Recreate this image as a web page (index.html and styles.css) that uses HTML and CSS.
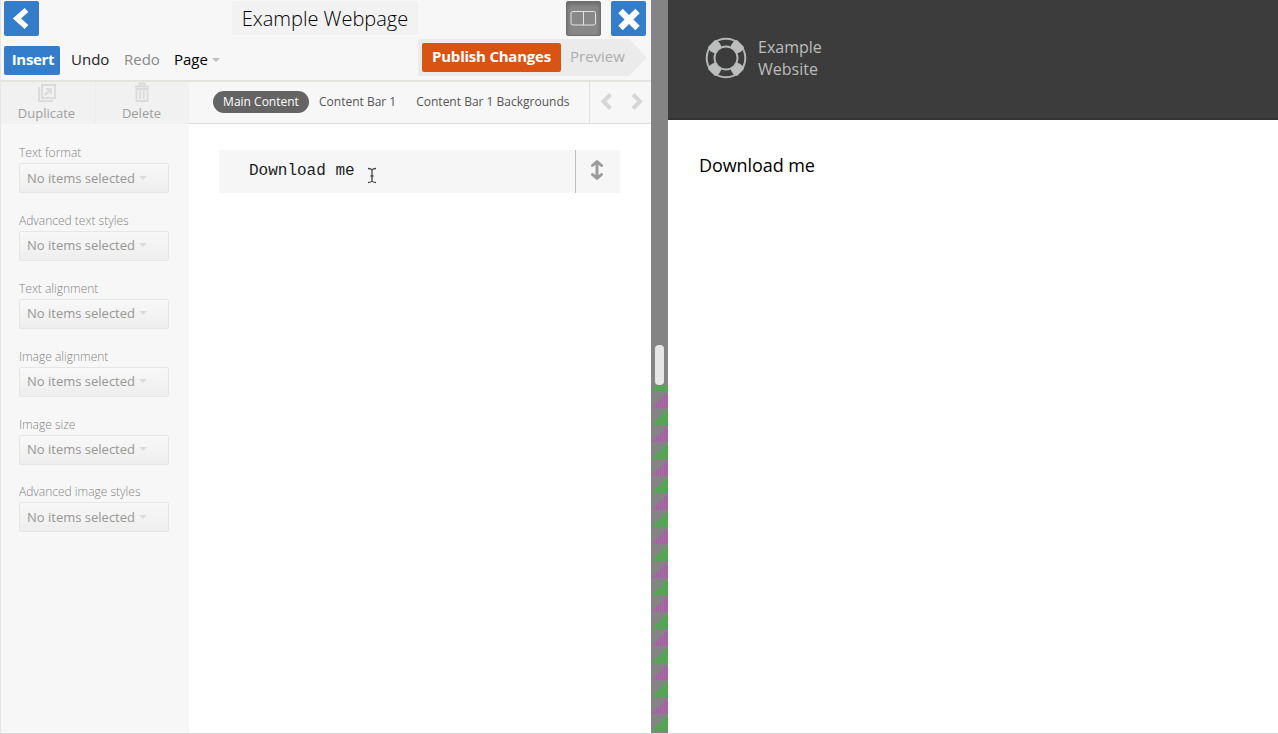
FILE: index.html
```
<!DOCTYPE html>
<html lang="en">
<head>
<meta charset="utf-8">
<title>Example Webpage</title>
<link rel="stylesheet" href="styles.css">
</head>
<body>
<div class="app">
  <section class="editor">
    <header class="header">
      <div class="title-row">
        <button class="square blue back" aria-label="Back"><svg width="35" height="35" viewBox="0 0 35 35"><path d="M22.500 9 13 17.500 22.500 26" fill="none" stroke="#fff" stroke-width="5.500"/></svg></button>
        <h1 class="title"><span>Example Webpage</span></h1>
        <button class="square split" aria-label="Split view"><svg width="35" height="35" viewBox="0 0 35 35"><rect x="5" y="10.500" width="24.500" height="13.500" rx="2" fill="none" stroke="#e4e4e4"/><path d="M17.500 10.500V24" stroke="#e4e4e4"/></svg></button>
        <button class="square blue" aria-label="Close"><svg width="35" height="35" viewBox="0 0 35 35"><path d="M9.500 10 26.500 27M26.500 10 9.500 27" stroke="#fff" stroke-width="6.200"/></svg></button>
      </div>
      <div class="tool-row">
        <button class="insert"><span>Insert</span></button>
        <span class="tool undo">Undo</span>
        <span class="tool redo">Redo</span>
        <span class="tool page">Page</span>
        <i class="caret"></i>
        <div class="publish-bar">
          <button class="publish"><span>Publish Changes</span></button>
          <span class="preview-label">Preview</span>
        </div>
      </div>
    </header>
    <div class="body">
      <aside class="sidebar">
        <div class="actions">
          <div class="action duplicate">
            <svg width="20" height="20" viewBox="0 0 20 20"><g fill="none" stroke="#dcdcdc" stroke-width="2"><path d="M5 3H18V16H5ZM2 5V19H16"/><path d="M8 13 14 7M9 7H14V12"/></g></svg>
            <span>Duplicate</span>
          </div>
          <div class="action delete">
            <svg width="20" height="20" viewBox="0 0 20 20"><g fill="none" stroke="#dadada" stroke-width="1.800"><path d="M3 4.500H17M7.500 4V1.500H12.500V4M4.500 7V19H15.500V7M8.200 8V17M11.800 8V17M3.600 7H16.400"/></g></svg>
            <span>Delete</span>
          </div>
        </div>
        <div class="fields">
          <div class="field"><label>Text format</label><div class="select"><span>No items selected</span><i></i></div></div>
          <div class="field"><label>Advanced text styles</label><div class="select"><span>No items selected</span><i></i></div></div>
          <div class="field"><label>Text alignment</label><div class="select"><span>No items selected</span><i></i></div></div>
          <div class="field"><label>Image alignment</label><div class="select"><span>No items selected</span><i></i></div></div>
          <div class="field"><label>Image size</label><div class="select"><span>No items selected</span><i></i></div></div>
          <div class="field"><label>Advanced image styles</label><div class="select"><span>No items selected</span><i></i></div></div>
        </div>
      </aside>
      <main class="content">
        <nav class="tabs">
          <span class="tab active">Main Content</span>
          <span class="tab bar">Content Bar 1</span>
          <span class="tab">Content Bar 1 Backgrounds</span>
          <div class="arrows">
            <svg width="60" height="40" viewBox="0 0 60 40"><path d="M20.500 12.500 13.500 19.500 20.500 26.500M43 12.500 50 19.500 43 26.500" fill="none" stroke="#d6d6d6" stroke-width="4"/></svg>
          </div>
        </nav>
        <div class="block">
          <div class="block-text">Download me</div>
          <div class="handle"><svg width="14" height="22" viewBox="0 0 14 22"><path d="M7 3V19M2.500 6.500 7 2.500 11.500 6.500M2.500 15.500 7 19.500 11.500 15.500" fill="none" stroke="#9b9b9b" stroke-width="3" stroke-linecap="round" stroke-linejoin="round"/></svg></div>
          <svg class="cursor" width="10" height="17" viewBox="0 0 10 17"><path d="M1 1.500Q4 1.500 5 3Q6 1.500 9 1.500M5 3V14M3.500 9H6.500M1 15.500Q4 15.500 5 14Q6 15.500 9 15.500" fill="none" stroke="#444" stroke-width="1.300"/></svg>
        </div>
      </main>
    </div>
  </section>
  <div class="divider">
    <svg width="18" height="733" viewBox="0 0 18 733">
      <defs>
        <pattern id="wedges" width="18" height="34" y="391" patternUnits="userSpaceOnUse">
          <path d="M2 16 17 1V17H2Z" fill="#c24abe"/>
          <path d="M2 33 17 18V34H2Z" fill="#27c427"/>
        </pattern>
      </defs>
      <rect y="385" width="18" height="348" fill="url(#wedges)"/>
      <path d="M3.500 385V733M5.500 385V733M7.500 385V733M9.500 385V733M11.500 385V733M13.500 385V733M15.500 385V733M17.500 385V733" stroke="#848484" stroke-width="1"/>
      <rect x="5" y="345" width="9" height="40" rx="4" fill="#e6e6e6"/>
    </svg>
  </div>
  <section class="site">
    <header class="site-header">
      <svg width="42" height="42" viewBox="0 0 42 42">
        <g fill="none" stroke="#b4b6b5"><circle cx="21" cy="21" r="19.300" stroke-width="2"/><circle cx="21" cy="21" r="11.500" stroke-width="2"/></g>
        <g fill="#bcbebd"><path d="M3 10 10 3Q15 4 16.500 10.500Q12 12 10.500 16.500Q4 15 3 10Z"/><path transform="rotate(90 21 21)" d="M3 10 10 3Q15 4 16.500 10.500Q12 12 10.500 16.500Q4 15 3 10Z"/><path transform="rotate(180 21 21)" d="M3 10 10 3Q15 4 16.500 10.500Q12 12 10.500 16.500Q4 15 3 10Z"/><path transform="rotate(270 21 21)" d="M3 10 10 3Q15 4 16.500 10.500Q12 12 10.500 16.500Q4 15 3 10Z"/></g>
      </svg>
      <div class="brand"><span>Example</span><span>Website</span></div>
    </header>
    <p class="site-text">Download me</p>
  </section>
</div>
</body>
</html>
```
FILE: styles.css
```
* { box-sizing: border-box; }
body { margin: 0; background: #fff; font-family: "Open Sans", sans-serif; overflow: hidden; }
button { border: 0; padding: 0; font-family: inherit; display: block; }
svg { display: block; }
.app { display: flex; width: 1278px; height: 734px; border-bottom: 1px solid #d8d8d8; }
.editor { flex: none; width: 651px; height: 733px; display: flex; flex-direction: column; border-left: 1px solid #e6e6e6; }
.header { height: 82px; background: #f7f7f7; border-bottom: 2px solid #e3e3e0; }
.title-row { display: flex; height: 39px; padding: 1px 5px 0 3px; }
.square { width: 35px; height: 35px; border-radius: 2px; flex: none; }
.blue { background: #347dca; }
.title { margin: 0 auto 0 193px; width: 186px; height: 34px; background: #f2f2f2; border-radius: 3px; font-size: 20px; font-weight: 300; line-height: 35px; color: #000; text-align: center; white-space: nowrap; }
.split { background: #888; border: 1px solid #6f6f6f; margin-right: 10px; box-shadow: inset 0 2px 4px #666; }
.split svg { margin: -1px; }
.tool-row { display: flex; align-items: flex-start; height: 41px; padding-left: 3px; white-space: nowrap; font-size: 15px; }
.insert { margin-top: 7px; width: 56px; height: 29px; background: #347dca; border-radius: 2px; color: #fff; font-size: 15px; font-weight: 700; line-height: 27px; letter-spacing: -0.3px; padding-left: 2px; }
.insert span { position: relative; top: -1px; }
.tool { margin-top: 7px; line-height: 26px; }
.undo { margin-left: 11px; width: 53px; color: #222; }
.redo { width: 50px; color: #888; }
.page { width: 35px; color: #000; }
.caret { margin: 19px 0 0 3px; border: 4px solid transparent; border-top-color: #bdbdbd; border-bottom: 0; }
.publish-bar { margin: 0 3px 0 auto; width: 230px; height: 37px; padding: 4px; display: flex; background: #ebebeb; clip-path: polygon(0 0, 211px 0, 229px 50%, 211px 100%, 0 100%); border-radius: 3px; }
.publish { width: 139px; height: 29px; background: #d95413; border-radius: 2px; color: #fff; font-size: 15px; font-weight: 700; line-height: 27px; letter-spacing: -0.22px; }
.publish span { position: relative; top: -1px; }
.preview-label { margin-left: 9px; line-height: 26px; color: #adadad; }
.body { flex: 1; display: flex; }
.sidebar { flex: none; width: 188px; background: #f7f7f7; }
.actions { display: flex; height: 42px; background: #f1f1f1; color: #9f9f9f; font-size: 13px; line-height: 18px; }
.action { flex: 1; display: flex; flex-direction: column; align-items: center; }
.duplicate { padding-right: 3px; border-right: 1px solid #ededed; }
.delete { padding-right: 2px; }
.action span { margin-top: 2px; }
.fields { padding: 20px 20px 0 18px; }
.field { height: 67.9px; }
.field label { display: block; height: 19px; font-size: 12px; font-weight: 300; line-height: 17px; color: #858583; white-space: nowrap; }
.select { height: 30px; display: flex; align-items: center; border: 1px solid #e6e6e6; border-radius: 2px; background: linear-gradient(#f8f8f8, #eee); padding: 0 0 1px 7px; font-size: 13px; color: #979795; white-space: nowrap; }
.select i { margin-left: 4px; border: 4px solid transparent; border-top: 4px solid #dcdcdc; border-bottom: 0; }
.content { flex: none; width: 462px; background: #fff; }
.tabs { height: 42px; padding-left: 24px; display: flex; align-items: center; border-bottom: 1px solid #dcdcdc; background: #f7f7f7; font-size: 12px; line-height: 20px; color: #555; white-space: nowrap; }
.tab { margin: 0 0 2px; }
.tab.bar { margin-right: 20px; }
.tab.active { width: 96px; height: 22px; line-height: 21px; margin: 0 10px 1px 0; background: #646464; color: #fff; border-radius: 11px; text-align: center; }
.arrows { margin-left: auto; width: 62px; height: 41px; border-left: 1px solid #e1e1e1; }
.block { position: relative; display: flex; width: 401px; height: 43px; margin: 26px 0 0 30px; background: #f6f6f6; }
.block-text { flex: 1; padding-left: 30px; font: 16px/43px "Liberation Mono", monospace; color: #222; }
.handle { width: 45px; border-left: 1px solid #bfbfbf; padding: 9px 0 0 14px; }
.cursor { position: absolute; left: 148px; top: 17px; }
.divider { flex: none; width: 17px; height: 733px; background: #848484; overflow: hidden; }
.divider svg { margin-left: -1px; }
.site { flex: 1; height: 733px; background: #fff; }
.site-header { height: 120px; display: flex; background: #3b3c3b; border-bottom: 2px solid #323332; padding: 37px 0 0 37px; }
.brand { margin-left: 11px; margin-top: -1px; display: flex; flex-direction: column; font-size: 16px; line-height: 22px; color: #bcbdbc; }
.site-text { margin: 32px 0 0 31px; font-size: 18px; line-height: 26px; letter-spacing: -0.08px; color: #000; }
```
